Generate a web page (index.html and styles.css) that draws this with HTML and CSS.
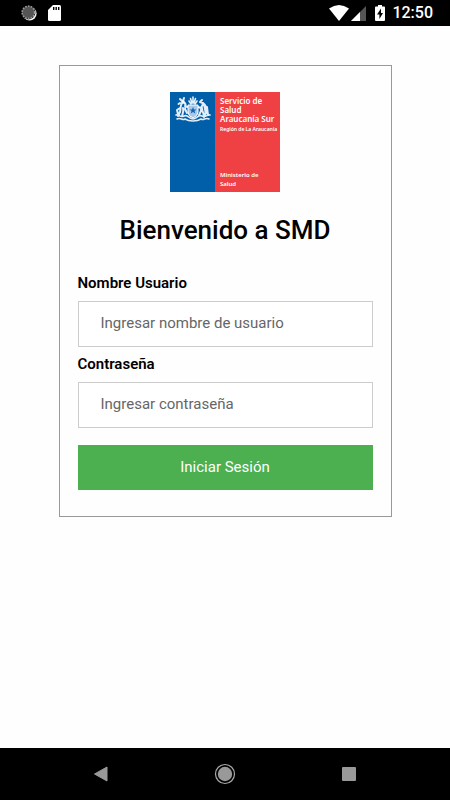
FILE: index.html
```html
<!DOCTYPE html>
<html lang="es">
<head>
<meta charset="utf-8">
<meta name="viewport" content="width=device-width, initial-scale=1">
<title>SMD</title>
<link rel="stylesheet" href="styles.css">
</head>
<body>
<header class="status">
  <div class="status-group status-left">
    <svg width="16" height="16" viewBox="0 0 16 16" aria-hidden="true">
      <circle cx="8.6" cy="8.6" r="7" fill="#f4f4f4"/>
      <circle cx="7.4" cy="7.4" r="7" fill="#222"/>
      <circle cx="7.4" cy="7.4" r="6.2" fill="#555" stroke="#999" stroke-width="1.6" stroke-dasharray="1.6 1.2"/>
    </svg>
    <svg width="13" height="16" viewBox="0 0 13 16" aria-hidden="true">
      <path d="M5 0h6.5Q13 0 13 1.5v13Q13 16 11.500 16h-10Q0 16 0 14.500V5z" fill="#fff"/>
      <path d="M5 2h1.400v3H5zM7.500 2h1.400v3H7.500zM10 2h1.400v3H10z" fill="#000"/>
    </svg>
  </div>
  <div class="status-group">
    <svg width="20" height="16" viewBox="0 0 20 16" aria-hidden="true"><path d="M0 3.500Q10-3.500 20 3.500L10 16z" fill="#fff"/></svg>
    <svg width="15" height="15" viewBox="0 0 15 15" aria-hidden="true"><path d="M15 0v15H0z" fill="#555"/><path d="M9 6v9H0z" fill="#fff"/></svg>
    <svg class="battery" width="10" height="16" viewBox="0 0 10 16" aria-hidden="true"><path d="M3 0h4v1.500h2q1 0 1 1V15q0 1-1 1H1q-1 0-1-1V2.500q0-1 1-1h2z" fill="#fff"/><path d="M6 3.500 2 9.500h2.400V14L8 8H6z" fill="#000"/></svg>
    <time class="clock">12:50</time>
  </div>
</header>
<main class="page">
  <form class="card">
    <div class="logo">
      <div class="logo-blue">
        <svg width="36" height="27" viewBox="0 0 36 27" aria-hidden="true">
          <g fill="none" stroke="#e3eefa" stroke-linecap="round" stroke-linejoin="round">
            <path d="M18 1v6M15.500 2.500 17 7M20.500 2.500 19 7M14 5l2 3M22 5l-2 3" stroke-width="1.600"/>
            <path d="M7 5 5 3M8 5l1-3M5 7 3.500 8M8 6c3 1 3 4 2 7l2 4M7 7c-2 3-1 6-2 9l-2 4M8 12c1 3 0 5-1 8M10 10l3 1M5 12l-3 2 1 4" stroke-width="2"/>
            <path d="M27 4l-2 2 3 1c0 3-3 4-2 8l-2 4M28 7c3 2 4 5 4 10M29 9c1 3 2 7 1 11M27 12c0 4 2 5 2 9M32 11l1 8M26 12l-3-1" stroke-width="2"/>
            <path d="M1 19c3-1 4 3 8 1s5 3 9 3 5-5 9-3 5-2 8-1M2 23c4-2 5 2 8 0M34 23c-4-2-5 2-8 0M10 23c3 2 5 2 8 2s5 0 8-2" stroke-width="1.600"/>
          </g>
          <path d="M13 9h10v7q0 4-5 6-5-2-5-6z" fill="#a9c9e8" stroke="#fff"/>
          <path d="m18 11 1 2.500h2.500l-2 1.500.8 2.500-2.300-1.500-2.300 1.500.8-2.500-2-1.500H17z" fill="#1764ad"/>
          <path d="M7 4.500h2.500v3H6.500z" fill="#fff"/>
        </svg>
      </div>
      <div class="logo-red">
        <p class="logo-name">Servicio de<br>Salud<br>Araucanía Sur</p>
        <p class="logo-region">Región de La Araucanía</p>
        <p class="logo-ministry">Ministerio de<br>Salud</p>
      </div>
    </div>
    <h1 class="title">Bienvenido a SMD</h1>
    <label class="label" for="user">Nombre Usuario</label>
    <input class="field" id="user" type="text" placeholder="Ingresar nombre de usuario">
    <label class="label" for="pass">Contraseña</label>
    <input class="field" id="pass" type="password" placeholder="Ingresar contraseña">
    <button class="submit" type="submit">Iniciar Sesión</button>
  </form>
</main>
<nav class="navbar">
  <button class="nav-button" type="button" aria-label="Atrás"><svg width="22" height="22" viewBox="0 0 22 22"><path d="M4.500 11 17 4v14z" fill="#999" stroke="#999" stroke-linejoin="round"/></svg></button>
  <button class="nav-button" type="button" aria-label="Inicio"><svg width="22" height="22" viewBox="0 0 22 22"><circle cx="11" cy="11" r="9.500" fill="none" stroke="#aaa" stroke-width="1.200"/><circle cx="11" cy="11" r="7.200" fill="#999"/></svg></button>
  <button class="nav-button" type="button" aria-label="Recientes"><svg width="22" height="22" viewBox="0 0 22 22"><rect x="4" y="4" width="14" height="14" rx="1" fill="#999"/></svg></button>
</nav>
</body>
</html>
```
FILE: styles.css
```css
* { box-sizing: border-box; }
body {
  margin: 0;
  min-height: 100vh;
  display: flex;
  flex-direction: column;
  background: #fefefe;
  color: #000;
  font-family: Roboto, "Liberation Sans", sans-serif;
}
p, h1 { margin: 0; }
svg { display: block; }
.status {
  display: flex;
  justify-content: space-between;
  height: 26px;
  padding: 0 17px 0 21px;
  background: #000;
  color: #fff;
}
.status-group { display: flex; align-items: center; gap: 2px; }
.status-left { gap: 11px; }
.battery { margin: 0 5px 0 7px; }
.clock { font-size: 16px; font-weight: 500; line-height: 28px; }
.page { flex: 1; padding: 39px 13%; }
.card {
  display: flex;
  flex-direction: column;
  padding: 26px 18px;
  border: 1px solid #999;
}
.logo {
  display: flex;
  align-self: center;
  width: 110px;
  height: 100px;
}
.logo-blue {
  width: 45px;
  padding: 4px 5px;
  background: #005fa8;
}
.logo-red {
  display: flex;
  flex: 1;
  flex-direction: column;
  padding: 4px 0 3px 5px;
  background: #ef4144;
  color: #fff;
  font-family: "Noto Sans", sans-serif;
  font-weight: 600;
  white-space: nowrap;
}
.logo-name { font-size: 8px; line-height: 9px; }
.logo-region { margin-top: 2px; font-size: 5px; line-height: 8px; }
.logo-ministry { margin-top: auto; font-size: 6px; line-height: 9px; }
.title {
  margin: 19px 0 22px;
  font-size: 26px;
  font-weight: 500;
  line-height: 38px;
  text-align: center;
}
.label { font-size: 15px; font-weight: 600; line-height: 24px; }
.field {
  width: 100%;
  height: 46px;
  margin: 6px 0 5px;
  padding: 0 22px 2px;
  border: 1px solid #ccc;
  border-radius: 0;
  background: #fff;
  color: #333;
  font: 400 15px Roboto, sans-serif;
}
.field::placeholder { color: #666; opacity: 1; }
.submit {
  height: 45px;
  margin-top: 12px;
  padding: 0 0 2px;
  border: 0;
  background: #4caf50;
  color: #fff;
  font: 400 15px Roboto, sans-serif;
}
.navbar {
  display: flex;
  justify-content: space-between;
  align-items: center;
  height: 52px;
  padding: 0 20%;
  background: #000;
}
.nav-button { padding: 0; border: 0; background: none; }
```
